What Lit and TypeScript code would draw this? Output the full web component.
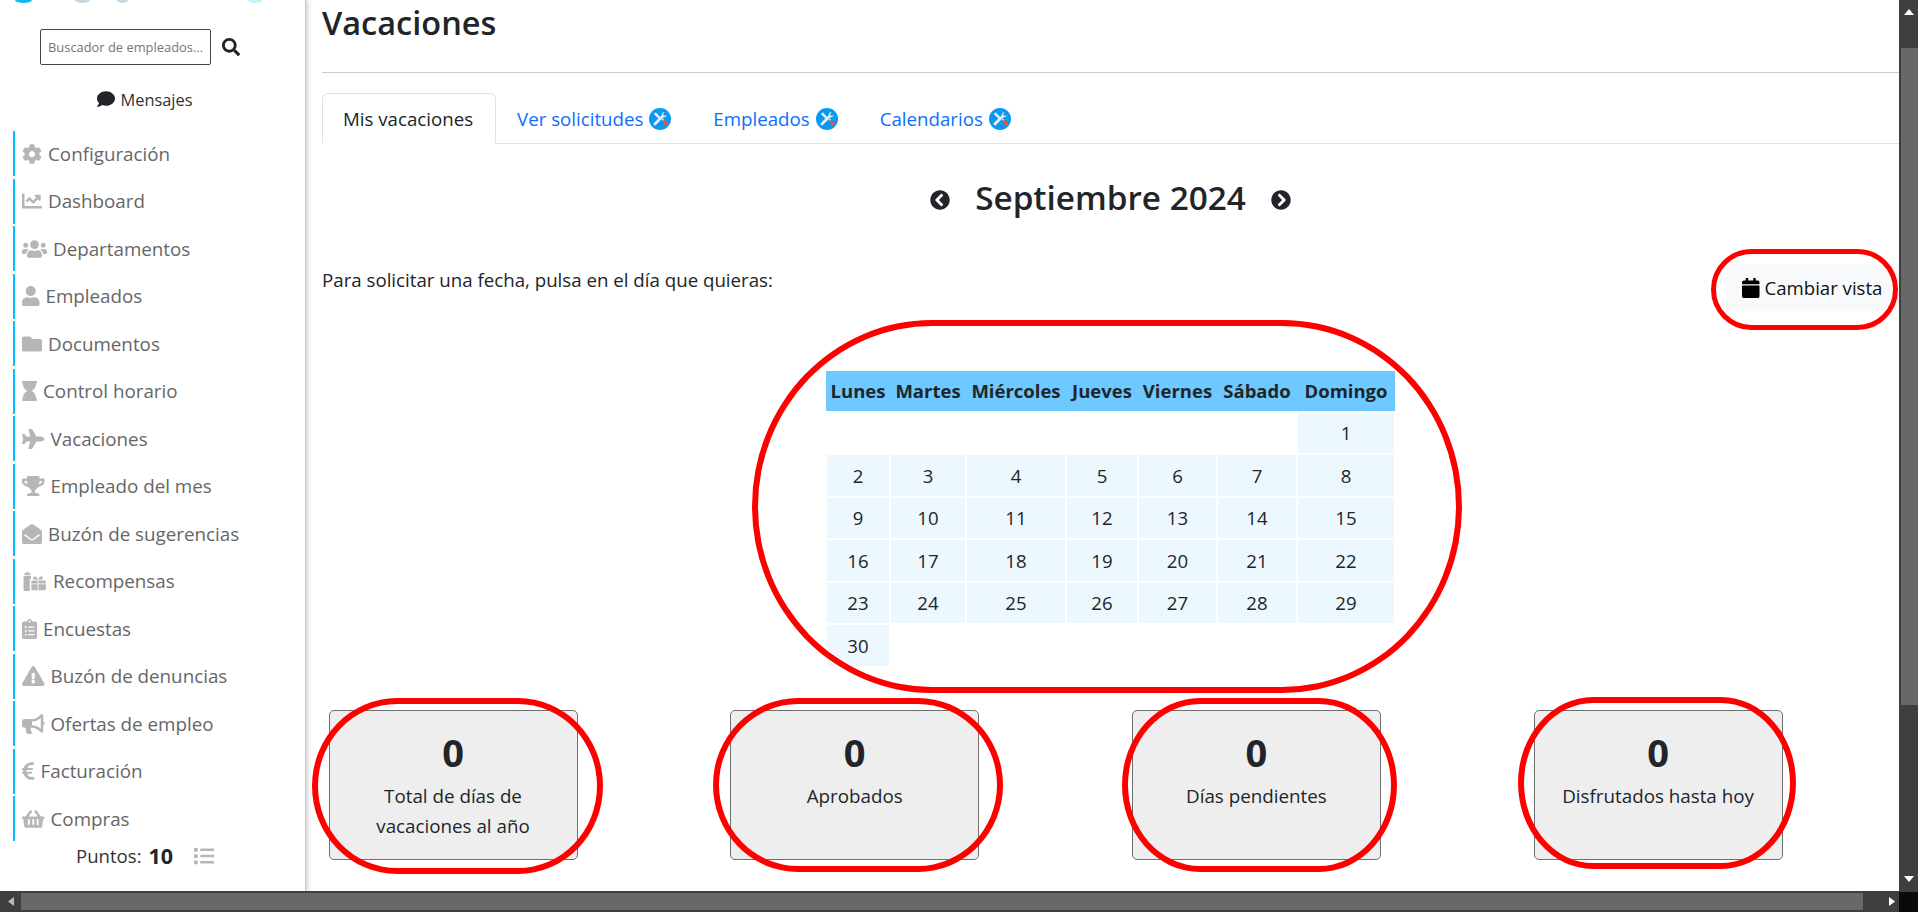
import { LitElement, html, css, svg } from "lit";
import { customElement } from "lit/decorators.js";

type Ico = { w: number; d: string };
const I: Record<string, Ico> = {
  search: { w: 512, d: "M505 442.7L405.3 343c-4.5-4.5-10.6-7-17-7H372c27.6-35.3 44-79.7 44-128C416 93.1 322.9 0 208 0S0 93.1 0 208s93.1 208 208 208c48.3 0 92.7-16.4 128-44v16.3c0 6.4 2.5 12.5 7 17l99.7 99.7c9.4 9.4 24.6 9.4 33.9 0l28.3-28.3c9.4-9.4 9.4-24.6.1-34zM208 336c-70.7 0-128-57.2-128-128 0-70.7 57.2-128 128-128 70.7 0 128 57.2 128 128 0 70.7-57.2 128-128 128z" },
  comment: { w: 512, d: "M256 32C114.6 32 0 125.1 0 240c0 49.6 21.4 95 57 130.7C44.5 421.1 2.7 466 2.2 466.5c-2.2 2.3-2.8 5.7-1.5 8.7S4.8 480 8 480c66.3 0 116-31.8 140.6-51.4 32.7 12.3 69 19.4 107.4 19.4 141.4 0 256-93.1 256-208S397.4 32 256 32z" },
  cog: { w: 512, d: "M487.4 315.7l-42.6-24.6c4.3-23.2 4.3-47 0-70.2l42.6-24.6c4.9-2.8 7.1-8.6 5.5-14-11.1-35.6-30-67.8-54.7-94.6-3.8-4.1-10-5.1-14.8-2.3L380.8 110c-17.9-15.4-38.5-27.3-60.8-35.1V25.8c0-5.6-3.9-10.5-9.4-11.7-36.7-8.2-74.3-7.8-109.2 0-5.5 1.2-9.4 6.1-9.4 11.7V75c-22.2 7.9-42.8 19.8-60.8 35.1L88.7 85.5c-4.9-2.8-11-1.9-14.8 2.3-24.7 26.7-43.6 58.9-54.7 94.6-1.7 5.4.6 11.2 5.5 14L67.3 221c-4.3 23.2-4.3 47 0 70.2l-42.6 24.6c-4.9 2.8-7.1 8.6-5.5 14 11.1 35.6 30 67.8 54.7 94.6 3.8 4.1 10 5.1 14.8 2.3l42.6-24.6c17.9 15.4 38.5 27.3 60.8 35.1v49.2c0 5.6 3.9 10.5 9.4 11.7 36.7 8.2 74.3 7.8 109.2 0 5.5-1.2 9.4-6.1 9.4-11.7v-49.2c22.2-7.9 42.8-19.8 60.8-35.1l42.6 24.6c4.9 2.8 11 1.9 14.8-2.3 24.7-26.7 43.6-58.9 54.7-94.6 1.5-5.5-.7-11.3-5.6-14.1zM256 336c-44.1 0-80-35.9-80-80s35.9-80 80-80 80 35.9 80 80-35.9 80-80 80z" },
  chart: { w: 512, d: "M496 384H64V80c0-8.84-7.16-16-16-16H16C7.16 64 0 71.16 0 80v336c0 17.67 14.33 32 32 32h464c8.84 0 16-7.16 16-16v-32c0-8.84-7.16-16-16-16zM464 96H345.94c-21.38 0-32.09 25.85-16.97 40.97l32.4 32.4L288 242.75l-73.37-73.37c-12.5-12.5-32.76-12.5-45.25 0l-68.69 68.69c-6.25 6.25-6.25 16.38 0 22.63l22.62 22.62c6.25 6.25 16.38 6.25 22.63 0L192 237.25l73.37 73.37c12.5 12.5 32.76 12.5 45.25 0l96-96 32.4 32.4c15.12 15.12 40.97 4.41 40.97-16.97V112c.01-8.84-7.15-16-15.99-16z" },
  users: { w: 640, d: "M96 224c35.3 0 64-28.7 64-64s-28.7-64-64-64-64 28.7-64 64 28.7 64 64 64zm448 0c35.3 0 64-28.7 64-64s-28.7-64-64-64-64 28.7-64 64 28.7 64 64 64zm32 32h-64c-17.6 0-33.5 7.1-45.1 18.6 40.3 22.1 68.9 62 75.1 109.4h66c17.7 0 32-14.3 32-32v-32c0-35.3-28.7-64-64-64zm-256 0c61.9 0 112-50.1 112-112S381.9 32 320 32 208 82.1 208 144s50.1 112 112 112zm76.8 32h-8.3c-20.8 10-43.9 16-68.5 16s-47.6-6-68.5-16h-8.3C179.6 288 128 339.6 128 403.2V432c0 26.5 21.5 48 48 48h288c26.5 0 48-21.5 48-48v-28.8c0-63.6-51.6-115.2-115.2-115.2zm-223.7-13.4C161.5 263.1 145.6 256 128 256H64c-35.3 0-64 28.7-64 64v32c0 17.7 14.3 32 32 32h65.9c6.3-47.4 34.9-87.3 75.2-109.4z" },
  user: { w: 448, d: "M224 256c70.7 0 128-57.3 128-128S294.7 0 224 0 96 57.3 96 128s57.3 128 128 128zm89.6 32h-16.7c-22.2 10.2-46.9 16-72.9 16s-50.6-5.8-72.9-16h-16.7C60.2 288 0 348.2 0 422.4V464c0 26.5 21.5 48 48 48h352c26.5 0 48-21.5 48-48v-41.6c0-74.2-60.2-134.4-134.4-134.4z" },
  folder: { w: 512, d: "M464 128H272l-64-64H48C21.49 64 0 85.49 0 112v288c0 26.51 21.49 48 48 48h416c26.51 0 48-21.49 48-48V176c0-26.51-21.49-48-48-48z" },
  hourglass: { w: 384, d: "M360 64c13.255 0 24-10.745 24-24V24c0-13.255-10.745-24-24-24H24C10.745 0 0 10.745 0 24v16c0 13.255 10.745 24 24 24 0 90.965 51.016 167.734 120.842 192C75.016 280.266 24 357.035 24 448c-13.255 0-24 10.745-24 24v16c0 13.255 10.745 24 24 24h336c13.255 0 24-10.745 24-24v-16c0-13.255-10.745-24-24-24 0-90.965-51.016-167.734-120.842-192C308.984 231.734 360 154.965 360 64z" },
  plane: { w: 576, d: "M480 192H365.71L260.61 8.06A16.014 16.014 0 0 0 246.71 0h-65.5c-10.63 0-18.3 10.17-15.38 20.39L214.86 192H112l-43.2-57.6c-3.02-4.03-7.77-6.4-12.8-6.4H16.01C5.6 128-2.04 137.78.49 147.88L32 256 .49 364.12C-2.04 374.22 5.6 384 16.01 384H56c5.04 0 9.78-2.37 12.8-6.4L112 320h102.86l-49.03 171.6c-2.92 10.22 4.75 20.4 15.38 20.4h65.5c5.74 0 11.04-3.08 13.89-8.06L365.71 320H480c35.35 0 96-28.65 96-64s-60.65-64-96-64z" },
  trophy: { w: 576, d: "M552 64H448V24c0-13.3-10.7-24-24-24H152c-13.3 0-24 10.7-24 24v40H24C10.7 64 0 74.7 0 88v56c0 35.7 22.5 72.4 61.9 100.7 31.5 22.7 69.8 37.1 110 41.7C203.3 338.5 240 360 240 360v72h-48c-35.3 0-64 20.7-64 56v12c0 6.6 5.4 12 12 12h296c6.6 0 12-5.4 12-12v-12c0-35.3-28.7-56-64-56h-48v-72s36.7-21.5 68.1-73.6c40.3-4.6 78.6-19 110-41.7 39.3-28.3 61.9-65 61.9-100.7V88c0-13.3-10.7-24-24-24zM99.3 192.8C74.9 175.2 64 155.6 64 144v-16h64.2c1 32.6 5.8 61.2 12.8 86.2-15.1-5.2-29.2-12.4-41.7-21.4zM512 144c0 16.1-17.7 36.1-35.3 48.8-12.5 9-26.7 16.2-41.8 21.4 7-25 11.8-53.6 12.8-86.2H512v16z" },
  envelope: { w: 512, d: "M512 464c0 26.51-21.49 48-48 48H48c-26.51 0-48-21.49-48-48V200.724a48 48 0 0 1 18.387-37.776c24.913-19.529 45.501-35.365 164.2-121.511C199.412 29.17 232.797-.347 256 .003c23.198-.354 56.596 29.172 73.413 41.433 118.687 86.137 139.303 101.995 164.2 121.512A48 48 0 0 1 512 200.724V464zm-65.666-196.605c-2.563-3.728-7.7-4.595-11.339-1.907-22.845 16.873-55.462 40.705-105.582 77.079-16.825 12.266-50.21 41.781-73.413 41.43-23.211.344-56.559-29.143-73.413-41.43-50.114-36.37-82.734-60.204-105.582-77.079-3.639-2.688-8.776-1.821-11.339 1.907l-9.072 13.196a7.998 7.998 0 0 0 1.839 10.967c22.887 16.899 55.454 40.69 105.303 76.868 20.274 14.781 56.524 47.813 92.264 47.573 35.724.242 71.961-32.771 92.263-47.573 49.85-36.179 82.418-59.97 105.303-76.868a7.998 7.998 0 0 0 1.839-10.967l-9.071-13.196z" },
  gifts: { w: 640, d: "M40 130h190v70h-30v312H70a30 30 0 0 1-30-30zM60 110l10-70 40 20 30-60 30 60 40-20 10 70zM240 240h160v80H240zM420 240h160a30 30 0 0 1 30 30v50H420zM240 340h160v150H270a30 30 0 0 1-30-30zM420 340h190v120a30 30 0 0 1-30 30H420zM300 220a46 46 0 0 1 60-70l50 60 50-60a46 46 0 0 1 60 70z" },
  clipboard: { w: 384, d: "M336 64h-80c0-35.3-28.7-64-64-64s-64 28.7-64 64H48C21.5 64 0 85.5 0 112v352c0 26.5 21.5 48 48 48h288c26.5 0 48-21.5 48-48V112c0-26.5-21.5-48-48-48zM96 424c-13.3 0-24-10.7-24-24s10.7-24 24-24 24 10.7 24 24-10.7 24-24 24zm0-96c-13.3 0-24-10.7-24-24s10.7-24 24-24 24 10.7 24 24-10.7 24-24 24zm0-96c-13.3 0-24-10.7-24-24s10.7-24 24-24 24 10.7 24 24-10.7 24-24 24zm96-192c13.3 0 24 10.7 24 24s-10.7 24-24 24-24-10.7-24-24 10.7-24 24-24zm128 368c0 4.4-3.6 8-8 8H168c-4.4 0-8-3.6-8-8v-16c0-4.4 3.6-8 8-8h144c4.4 0 8 3.6 8 8v16zm0-96c0 4.4-3.6 8-8 8H168c-4.4 0-8-3.6-8-8v-16c0-4.4 3.6-8 8-8h144c4.4 0 8 3.6 8 8v16zm0-96c0 4.4-3.6 8-8 8H168c-4.4 0-8-3.6-8-8v-16c0-4.4 3.6-8 8-8h144c4.4 0 8 3.6 8 8v16z" },
  warning: { w: 576, d: "M569.517 440.013C587.975 472.007 564.806 512 527.94 512H48.054c-36.937 0-59.999-40.055-41.577-71.987L246.423 23.985c18.467-32.009 64.72-31.951 83.154 0l239.94 416.028zM288 354c-25.405 0-46 20.595-46 46s20.595 46 46 46 46-20.595 46-46-20.595-46-46-46zm-43.673-165.346l7.418 136c.347 6.364 5.609 11.346 11.982 11.346h48.546c6.373 0 11.635-4.982 11.982-11.346l7.418-136c.375-6.874-5.098-12.654-11.982-12.654h-63.383c-6.884 0-12.356 5.78-11.981 12.654z" },
  bullhorn: { w: 576, d: "M576 240c0-23.63-12.95-44.04-32-55.12V32.01C544 23.26 537.02 0 512 0c-7.12 0-14.19 2.38-19.98 7.02l-85.03 68.03C364.28 109.19 310.66 128 256 128H64c-35.35 0-64 28.65-64 64v96c0 35.35 28.65 64 64 64h33.7c-1.39 10.48-2.18 21.14-2.18 32 0 39.77 9.26 77.35 25.56 110.94 5.19 10.69 16.52 17.06 28.4 17.06h74.28c26.05 0 41.69-29.84 25.9-50.56-16.4-21.52-26.15-48.36-26.15-77.44 0-11.11 1.62-21.79 4.41-32H256c54.66 0 108.28 18.81 150.98 52.95l85.03 68.03a32.023 32.023 0 0 0 19.98 7.02c24.92 0 32-22.78 32-32V295.13C563.05 284.04 576 263.63 576 240zm-96 141.42l-33.05-26.44C392.95 311.78 325.12 288 256 288v-96c69.12 0 136.95-23.78 190.95-66.98L480 98.58v282.84z" },
  euro: { w: 320, d: "M310.706 413.765c-1.314-6.63-7.835-10.872-14.424-9.369-10.692 2.439-27.422 5.413-45.426 5.413-56.763 0-101.929-34.79-121.461-85.449h113.689a12 12 0 0 0 11.708-9.369l6.373-28.36c1.686-7.502-4.019-14.631-11.708-14.631H115.22c-1.21-14.328-1.414-28.287.137-42.245H261.95a12 12 0 0 0 11.723-9.434l6.512-29.755c1.638-7.484-4.061-14.566-11.723-14.566H130.184c20.633-44.991 62.69-75.03 117.619-75.03 14.486 0 28.564 2.25 37.851 4.145 6.216 1.268 12.347-2.498 14.002-8.623l11.991-44.368c1.822-6.741-2.465-13.616-9.326-14.917C290.217 34.912 270.71 32 249.635 32 152.451 32 74.03 92.252 45.075 176H12c-6.627 0-12 5.373-12 12v29.755c0 6.627 5.373 12 12 12h21.569c-1.009 13.607-1.181 29.287-.181 42.245H12c-6.627 0-12 5.373-12 12v28.36c0 6.627 5.373 12 12 12h30.114C67.139 414.692 145.264 480 249.635 480c26.301 0 48.562-4.544 61.101-7.788 6.167-1.595 10.027-7.708 8.788-13.957l-8.818-44.49z" },
  basket: { w: 576, d: "M576 216v16c0 13.255-10.745 24-24 24h-8l-26.113 182.788C514.509 462.435 494.257 480 470.37 480H105.63c-23.887 0-44.139-17.565-47.518-41.212L32 256h-8c-13.255 0-24-10.745-24-24v-16c0-13.255 10.745-24 24-24h67.341l106.78-146.821c10.395-14.292 30.407-17.453 44.701-7.058 14.293 10.395 17.453 30.408 7.058 44.701L170.477 192h235.046L326.12 82.821c-10.395-14.292-7.234-34.306 7.059-44.701 14.291-10.395 34.306-7.235 44.701 7.058L484.659 192H552c13.255 0 24 10.745 24 24zM312 392V280c0-13.255-10.745-24-24-24s-24 10.745-24 24v112c0 13.255 10.745 24 24 24s24-10.745 24-24zm112 0V280c0-13.255-10.745-24-24-24s-24 10.745-24 24v112c0 13.255 10.745 24 24 24s24-10.745 24-24zm-224 0V280c0-13.255-10.745-24-24-24s-24 10.745-24 24v112c0 13.255 10.745 24 24 24s24-10.745 24-24z" },
  list: { w: 512, d: "M80 368H16a16 16 0 0 0-16 16v64a16 16 0 0 0 16 16h64a16 16 0 0 0 16-16v-64a16 16 0 0 0-16-16zm0-320H16A16 16 0 0 0 0 64v64a16 16 0 0 0 16 16h64a16 16 0 0 0 16-16V64a16 16 0 0 0-16-16zm0 160H16a16 16 0 0 0-16 16v64a16 16 0 0 0 16 16h64a16 16 0 0 0 16-16v-64a16 16 0 0 0-16-16zm416 176H176a16 16 0 0 0-16 16v32a16 16 0 0 0 16 16h320a16 16 0 0 0 16-16v-32a16 16 0 0 0-16-16zm0-320H176a16 16 0 0 0-16 16v32a16 16 0 0 0 16 16h320a16 16 0 0 0 16-16V80a16 16 0 0 0-16-16zm0 160H176a16 16 0 0 0-16 16v32a16 16 0 0 0 16 16h320a16 16 0 0 0 16-16v-32a16 16 0 0 0-16-16z" },
  calendar: { w: 448, d: "M12 192h424c6.6 0 12 5.4 12 12v260c0 26.5-21.5 48-48 48H48c-26.5 0-48-21.5-48-48V204c0-6.6 5.4-12 12-12zm436-44v-36c0-26.5-21.5-48-48-48h-48V12c0-6.6-5.4-12-12-12h-40c-6.6 0-12 5.4-12 12v52H160V12c0-6.6-5.4-12-12-12h-40c-6.6 0-12 5.4-12 12v52H48C21.5 64 0 85.5 0 112v36c0 6.6 5.4 12 12 12h424c6.6 0 12-5.4 12-12z" },
  prev: { w: 512, d: "M256 504C119 504 8 393 8 256S119 8 256 8s248 111 248 248-111 248-248 248zM142.1 273l135.5 135.5c9.4 9.4 24.6 9.4 33.9 0l17-17c9.4-9.4 9.4-24.6 0-33.9L226.9 256l101.6-101.6c9.4-9.4 9.4-24.6 0-33.9l-17-17c-9.4-9.4-24.6-9.4-33.9 0L142.1 239c-9.4 9.4-9.4 24.6 0 34z" },
  next: { w: 512, d: "M256 8c137 0 248 111 248 248S393 504 256 504 8 393 8 256 119 8 256 8zm113.9 231L234.4 103.5c-9.4-9.4-24.6-9.4-33.9 0l-17 17c-9.4 9.4-9.4 24.6 0 33.9L285.1 256 183.5 357.6c-9.4 9.4-9.4 24.6 0 33.9l17 17c9.4 9.4 24.6 9.4 33.9 0L369.9 273c9.4-9.4 9.4-24.6 0-34z" },
};

const ico = (n: string, h = 20) => {
  const i = I[n];
  return html`<svg class="ico" viewBox="0 0 ${i.w} 512" width=${(i.w / 512) * h} height=${h} fill="currentColor" aria-hidden="true"><path d=${i.d}></path></svg>`;
};

const tools = () => html`<svg class="tools" viewBox="0 0 22 22" width="22" height="22" aria-hidden="true">
  <circle cx="11" cy="11" r="11" fill="#0b98f2"></circle>
  ${svg`<path d="M5.5 5 L7 4.6 L12 10 L10.6 11.4 L5.2 6.4Z" fill="#eaf3f8"></path>
  <path d="M12.6 11.6 L14 10.4 L15.4 11.8 L14 13Z" fill="#cfd8dc"></path>
  <path d="M13.6 13.4 L15.2 11.8 L19 15.4 C18.6 16.6 17.6 17.6 16.6 18Z" fill="#f0562a"></path>
  <path d="M15 4.2 C13.4 4.2 12.4 5.6 12.8 7.2 L4.6 15.2 C3.8 16 5.8 18 6.6 17.2 L14.6 9.2 C16.2 9.6 17.6 8.4 17.6 6.8 L16 8 L14.4 7.2 L14.2 5.6 L15.8 4.4Z" fill="#e8f1f6"></path>`}
</svg>`;

const MENU: [string, string][] = [
  ["cog", "Configuración"], ["chart", "Dashboard"], ["users", "Departamentos"], ["user", "Empleados"],
  ["folder", "Documentos"], ["hourglass", "Control horario"], ["plane", "Vacaciones"], ["trophy", "Empleado del mes"],
  ["envelope", "Buzón de sugerencias"], ["gifts", "Recompensas"], ["clipboard", "Encuestas"], ["warning", "Buzón de denuncias"],
  ["bullhorn", "Ofertas de empleo"], ["euro", "Facturación"], ["basket", "Compras"],
];
const DAYS = ["Lunes", "Martes", "Miércoles", "Jueves", "Viernes", "Sábado", "Domingo"];
const WEEKS: (number | null)[][] = [
  [null, null, null, null, null, null, 1],
  [2, 3, 4, 5, 6, 7, 8],
  [9, 10, 11, 12, 13, 14, 15],
  [16, 17, 18, 19, 20, 21, 22],
  [23, 24, 25, 26, 27, 28, 29],
  [30, null, null, null, null, null, null],
];
const STATS = ["Total de días de vacaciones al año", "Aprobados", "Días pendientes", "Disfrutados hasta hoy"];

@customElement("app-root")
export class AppRoot extends LitElement {
  static styles = css`
    :host {
      display: block;
      width: 1918px;
      height: 912px;
      overflow: hidden;
      font-family: "Open Sans", "Noto Sans", sans-serif;
      color: #212529;
      background: #fff;
    }
    * { box-sizing: border-box; }
    .page {
      position: relative;
      display: grid;
      grid-template-columns: 1899px 19px;
      grid-template-rows: 891px 21px;
      width: 1918px;
      height: 912px;
      overflow: hidden;
    }
    .content { display: flex; min-width: 0; overflow: hidden; }
    .ico { display: block; flex: none; }

    .side {
      width: 306px;
      flex: none;
      height: 891px;
      background: #fff;
      border-right: 1px solid #c4c4c4;
      box-shadow: 2px 0 5px rgba(0, 0, 0, 0.18);
      position: relative;
      z-index: 1;
      overflow: hidden;
    }
    .logo { display: flex; height: 3px; overflow: hidden; }
    .logo span { height: 6px; margin-top: -3px; border-radius: 50%; }
    .l1 { width: 17px; margin-left: 15px; background: #10b9f2; }
    .l2 { width: 15px; margin-left: 43px; background: #c4d8e4; }
    .l3 { width: 11px; margin-left: 27px; background: #c4d8e4; }
    .l4 { width: 14px; margin-left: 120px; background: #c5effb; }

    .search { display: flex; align-items: center; margin: 26px 0 0 40px; }
    .search-box {
      width: 171px;
      height: 36px;
      border: 1px solid #444;
      border-radius: 2px;
      padding-left: 7px;
      font-size: 12.9px;
      line-height: 34px;
      color: #757575;
      white-space: nowrap;
    }
    .search .ico { margin-left: 11px; color: #212529; }
    .msg {
      display: flex;
      align-items: center;
      justify-content: center;
      gap: 5px;
      height: 24px;
      margin: 22px 0 0 -15px;
      font-size: 16.4px;
      color: #333;
    }
    .msg .ico { color: #212529; }
    .menu { margin: 20px 0 0 13px; }
    .item {
      display: flex;
      align-items: center;
      gap: 6px;
      height: 45px;
      margin-bottom: 2.5px;
      padding-left: 7px;
      border-left: 2px solid #00bfff;
      color: #666;
      font-size: 18.8px;
      white-space: nowrap;
    }
    .item .ico { color: #b6b6b6; }
    .points {
      display: flex;
      align-items: center;
      height: 24px;
      margin: 2px 0 0 76px;
      font-size: 18.6px;
      color: #333;
    }
    .points b { margin-left: 7px; font-size: 21.5px; color: #212529; }
    .points .ico { margin-left: 21px; color: #b6b6b6; }

    .main { flex: 1; min-width: 0; padding-left: 16px; overflow: hidden; }
    .title {
      height: 73px;
      border-bottom: 1px solid #ccc;
      margin: 0;
      font-size: 32.5px;
      font-weight: 600;
      line-height: 45px;
      color: #212529;
    }
    .tabs {
      display: flex;
      height: 51px;
      margin-top: 20px;
      border-bottom: 1px solid #dee2e6;
    }
    .tab {
      display: flex;
      align-items: center;
      gap: 6px;
      padding: 0 21px;
      height: 51px;
      color: #0d6efd;
      font-size: 18.7px;
      white-space: nowrap;
    }
    .tab.on {
      width: 174px;
      color: #212529;
      background: #fff;
      border: 1px solid #dee2e6;
      border-bottom-color: #fff;
      border-radius: 6px 6px 0 0;
      padding: 0 0 0 20px;
    }
    .month {
      display: flex;
      align-items: center;
      justify-content: center;
      gap: 25px;
      height: 106px;
      font-size: 33.3px;
      font-weight: 600;
      color: #212529;
    }
    .month h2 { margin: 0; font: inherit; }
    .month .ico { margin-top: 5px; }
    .row {
      display: flex;
      justify-content: space-between;
      align-items: flex-start;
      height: 121px;
    }
    .hint { margin-top: 18px; font-size: 18.7px; line-height: 24px; }
    .switch {
      display: flex;
      align-items: center;
      gap: 5px;
      width: 173px;
      height: 47px;
      margin-top: 14px;
      padding-left: 16px;
      background: #f8f9fa;
      font-size: 18.6px;
      color: #111;
      white-space: nowrap;
    }
    .switch .ico { color: #000; }

    .cal { width: 569px; margin: 0 auto; }
    .week {
      display: grid;
      grid-template-columns: 62px 74px 98px 70px 77px 78px 96px;
      column-gap: 2px;
      padding: 0 1px;
      height: 40.5px;
      margin-bottom: 2px;
    }
    .week.head {
      height: 39.5px;
      background: #6dc9ff;
    }
    .week > span {
      display: flex;
      align-items: center;
      justify-content: center;
      white-space: nowrap;
      font-size: 18.6px;
    }
    .week.head > span { font-size: 18.5px; font-weight: 700; }
    .day { background: #edf8fe; }

    .stats { display: flex; gap: 152.7px; margin: 44.5px 0 0 6.5px; }
    .stat {
      width: 249px;
      height: 150px;
      flex: none;
      padding: 21px 10px 0;
      background: #eee;
      border: 1px solid #6e6e6e;
      border-radius: 5px;
      text-align: center;
    }
    .stat b { display: block; font-size: 38px; line-height: 40px; font-weight: 700; }
    .stat p { margin: 9px 0 0; padding: 0 12px; font-size: 18.8px; line-height: 30px; }

    .vbar { position: relative; background: #3f3f3f; grid-row: 1; grid-column: 2; display: flex; flex-direction: column; align-items: center; }
    .vthumb { width: 17px; height: 657px; margin: 48px 0 0 2px; background: #686868; }
    .arrow { position: absolute; display: block; }
    .up { top: 9px; left: 5px; }
    .down { bottom: 9px; left: 5px; }
    .hbar { grid-row: 2; grid-column: 1; background: #3f3f3f; position: relative; display: flex; align-items: center; }
    .hthumb { width: 1842px; height: 17px; margin-left: 21px; background: #686868; }
    .left { left: 8px; top: 6px; }
    .right { right: 4px; top: 6px; }
    .corner-wrap { grid-row: 2; grid-column: 2; background: #3f3f3f; display: flex; flex-direction: column; }
    .corner-wrap i { display: block; flex: 1; margin-top: 1px; background: #0a0a0a; }

    .ring { position: absolute; border: 6px solid #f00; z-index: 5; pointer-events: none; }
    .r-switch { left: 1711px; top: 249px; width: 187px; height: 81px; border-radius: 41px; border-width: 5px; }
    .r-cal { left: 752px; top: 320px; width: 710px; height: 373px; border-radius: 180px / 50%; }
    .r-s1 { left: 312px; top: 698px; width: 291px; height: 176px; border-radius: 85px / 50%; }
    .r-s2 { left: 713px; top: 698px; width: 290px; height: 174px; border-radius: 85px / 50%; }
    .r-s3 { left: 1122px; top: 698px; width: 275px; height: 174px; border-radius: 78px / 50%; }
    .r-s4 { left: 1518px; top: 697px; width: 278px; height: 172px; border-radius: 75px / 50%; }
  `;

  render() {
    return html`<div class="page">
      <div class="content">
        <aside class="side">
          <div class="logo"><span class="l1"></span><span class="l2"></span><span class="l3"></span><span class="l4"></span></div>
          <div class="search"><div class="search-box">Buscador de empleados...</div>${ico("search", 18)}</div>
          <div class="msg">${ico("comment", 18)}<span>Mensajes</span></div>
          <nav class="menu">
            ${MENU.map(([i, t]) => html`<div class="item">${ico(i)}<span>${t}</span></div>`)}
          </nav>
          <div class="points">Puntos: <b>10</b>${ico("list", 20)}</div>
        </aside>
        <main class="main">
          <h1 class="title">Vacaciones</h1>
          <div class="tabs">
            <div class="tab on">Mis vacaciones</div>
            <div class="tab">Ver solicitudes ${tools()}</div>
            <div class="tab">Empleados ${tools()}</div>
            <div class="tab">Calendarios ${tools()}</div>
          </div>
          <div class="month">${ico("prev", 20)}<h2>Septiembre 2024</h2>${ico("next", 20)}</div>
          <div class="row">
            <div class="hint">Para solicitar una fecha, pulsa en el día que quieras:</div>
            <div class="switch">${ico("calendar", 20)}<span>Cambiar vista</span></div>
          </div>
          <div class="cal">
            <div class="week head">${DAYS.map((d) => html`<span>${d}</span>`)}</div>
            ${WEEKS.map((w) => html`<div class="week">${w.map((d) => d === null ? html`<span></span>` : html`<span class="day">${d}</span>`)}</div>`)}
          </div>
          <div class="stats">
            ${STATS.map((s) => html`<div class="stat"><b>0</b><p>${s}</p></div>`)}
          </div>
        </main>
      </div>
      <div class="vbar">
        <div class="vthumb"></div>
        <svg class="arrow up" width="10" height="6" viewBox="0 0 10 6"><path d="M5 0L10 6H0Z" fill="#fff"></path></svg>
        <svg class="arrow down" width="10" height="6" viewBox="0 0 10 6"><path d="M0 0H10L5 6Z" fill="#fff"></path></svg>
      </div>
      <div class="hbar">
        <div class="hthumb"></div>
        <svg class="arrow left" width="6" height="9" viewBox="0 0 6 9"><path d="M6 0V9L0 4.5Z" fill="#bbb"></path></svg>
        <svg class="arrow right" width="6" height="9" viewBox="0 0 6 9"><path d="M0 0L6 4.5L0 9Z" fill="#fff"></path></svg>
      </div>
      <div class="corner-wrap"><i></i></div>
      <div class="ring r-switch"></div>
      <div class="ring r-cal"></div>
      <div class="ring r-s1"></div>
      <div class="ring r-s2"></div>
      <div class="ring r-s3"></div>
      <div class="ring r-s4"></div>
    </div>`;
  }
}
